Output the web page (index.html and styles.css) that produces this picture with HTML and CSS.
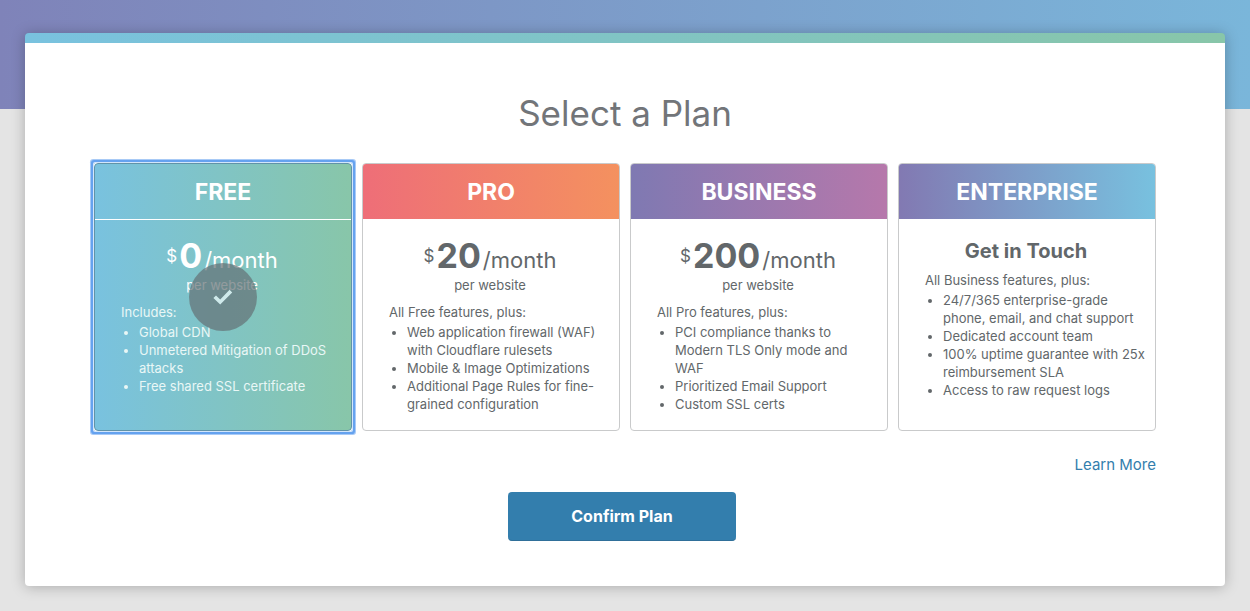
FILE: index.html
```html
<!DOCTYPE html>
<html lang="en">
<head>
<meta charset="utf-8">
<meta name="viewport" content="width=device-width, initial-scale=1">
<title>Select a Plan</title>
<link rel="stylesheet" href="styles.css">
</head>
<body>
<main class="page">
  <form class="panel">
    <h1 class="title">Select a Plan</h1>
    <div class="plans" role="radiogroup" aria-label="Plan">
      <label class="option selected">
        <input class="choice" type="radio" name="plan" value="free" checked>
        <span class="card">
          <span class="name">FREE</span>
          <span class="body">
            <span class="price"><span class="currency">$</span><strong class="amount">0</strong>/month</span>
            <span class="unit">per website</span>
            <span class="intro">Includes:</span>
            <span class="features" role="list">
              <span class="feature" role="listitem">Global CDN</span>
              <span class="feature" role="listitem">Unmetered Mitigation of DDoS attacks</span>
              <span class="feature" role="listitem">Free shared SSL certificate</span>
            </span>
          </span>
          <span class="check">
            <svg width="20" height="16" viewBox="0 0 20 16" aria-hidden="true"><path d="M0.4 9 3 6.4 7.2 10.4 16.6 0.8 19.2 3.4 7.2 15.6Z" fill="#cfeaeb"/></svg>
          </span>
        </span>
      </label>
      <label class="option">
        <input class="choice" type="radio" name="plan" value="pro">
        <span class="card">
          <span class="name pro">PRO</span>
          <span class="body">
            <span class="price"><span class="currency">$</span><strong class="amount">20</strong>/month</span>
            <span class="unit">per website</span>
            <span class="intro">All Free features, plus:</span>
            <span class="features" role="list">
              <span class="feature" role="listitem">Web application firewall (WAF) with Cloudflare rulesets</span>
              <span class="feature" role="listitem">Mobile &amp; Image Optimizations</span>
              <span class="feature" role="listitem">Additional Page Rules for fine-grained configuration</span>
            </span>
          </span>
        </span>
      </label>
      <label class="option">
        <input class="choice" type="radio" name="plan" value="business">
        <span class="card">
          <span class="name business">BUSINESS</span>
          <span class="body">
            <span class="price"><span class="currency">$</span><strong class="amount">200</strong>/month</span>
            <span class="unit">per website</span>
            <span class="intro">All Pro features, plus:</span>
            <span class="features" role="list">
              <span class="feature" role="listitem">PCI compliance thanks to Modern TLS Only mode and WAF</span>
              <span class="feature" role="listitem">Prioritized Email Support</span>
              <span class="feature" role="listitem">Custom SSL certs</span>
            </span>
          </span>
        </span>
      </label>
      <label class="option">
        <input class="choice" type="radio" name="plan" value="enterprise">
        <span class="card">
          <span class="name enterprise">ENTERPRISE</span>
          <span class="body">
            <strong class="contact">Get in Touch</strong>
            <span class="intro">All Business features, plus:</span>
            <span class="features" role="list">
              <span class="feature" role="listitem">24/7/365 enterprise-grade phone, email, and chat support</span>
              <span class="feature" role="listitem">Dedicated account team</span>
              <span class="feature" role="listitem">100% uptime guarantee with 25x reimbursement SLA</span>
              <span class="feature" role="listitem">Access to raw request logs</span>
            </span>
          </span>
        </span>
      </label>
    </div>
    <a class="more" href="#plans">Learn More</a>
    <button class="confirm" type="submit">Confirm Plan</button>
  </form>
</main>
</body>
</html>
```

FILE: styles.css
```css
* {
  box-sizing: border-box;
}

body {
  margin: 0;
  background: #e4e4e4;
  color: #62676a;
  font-family: Inter, "Liberation Sans", sans-serif;
  font-size: 13px;
  line-height: 18px;
}

.page {
  padding: 33px 25px 25px;
  background: linear-gradient(90deg, #7f83b9, #7ab6da) top / 100% 109px no-repeat;
}

.panel {
  display: flex;
  flex-direction: column;
  padding: 56px 69px 45px;
  border-radius: 4px;
  background: linear-gradient(90deg, #79c2df, #88c6a9) top / 100% 10px no-repeat, #fff;
  box-shadow: 0 1px 14px rgba(0, 0, 0, 0.25);
}

.title {
  margin: 0 0 26px;
  color: #727579;
  font-size: 35px;
  font-weight: 400;
  line-height: 48px;
  text-align: center;
}

.plans {
  display: grid;
  grid-template-columns: repeat(4, minmax(0, 1fr));
  gap: 10px;
}

.option {
  display: flex;
  cursor: pointer;
}

.choice {
  position: absolute;
  opacity: 0;
}

.card {
  position: relative;
  display: flex;
  flex: 1;
  flex-direction: column;
  overflow: hidden;
  border: 1px solid #c9cacb;
  border-radius: 4px;
}

.name {
  padding: 12px 0 11px;
  color: #fff;
  font-size: 23px;
  font-weight: 700;
  line-height: 32px;
  text-align: center;
}

.pro {
  background: linear-gradient(90deg, #ee6e78, #f4915f);
}

.business {
  background: linear-gradient(90deg, #7f79b2, #b678ab);
}

.enterprise {
  background: linear-gradient(90deg, #8279b2, #78c1df);
}

.body {
  display: flex;
  flex-direction: column;
  padding: 17px 8px 17px 26px;
}

.price,
.unit,
.contact {
  margin-left: -20px;
  text-align: center;
}

.price {
  height: 40px;
  font-size: 22px;
  line-height: 40px;
}

.currency {
  margin-right: 2px;
  font-size: 17px;
  line-height: 1;
  vertical-align: 6px;
}

.amount {
  margin-right: 2px;
  font-size: 34px;
  font-weight: 700;
}

.contact {
  margin-bottom: 5px;
  font-size: 20px;
  font-weight: 700;
  line-height: 30px;
}

.unit {
  margin-bottom: 9px;
}

.intro {
  margin-bottom: 2px;
}

.features {
  display: block;
  padding-left: 18px;
}

.feature {
  display: list-item;
  list-style: disc;
}

.selected {
  border-radius: 1px;
  box-shadow: 0 0 0 1px #d3e6fb, 0 0 0 3px #65a2ef, 0 0 0 4px #a8caf6;
}

.selected .card {
  border-color: #6193a8;
  background: linear-gradient(90deg, #79c2df, #88c6a9);
  color: #fff;
}

.selected .name {
  border-bottom: 1px solid #fff;
}

.selected .body {
  padding-top: 16px;
}

.selected .intro,
.selected .features {
  color: #e9f7f6;
}

.check {
  position: absolute;
  top: 50%;
  left: 50%;
  display: grid;
  place-items: center;
  width: 68px;
  height: 68px;
  border-radius: 50%;
  background: rgba(100, 113, 117, 0.7);
  transform: translate(-50%, -50%);
}

.more {
  align-self: flex-end;
  margin: 22px 0 16px;
  color: #337ead;
  font-size: 15px;
  line-height: 23px;
  text-decoration: none;
}

.confirm {
  align-self: center;
  width: 228px;
  height: 49px;
  margin-right: 6px;
  border: 0;
  border-bottom: 1px solid #2f6f99;
  border-radius: 4px;
  background: #337ead;
  color: #fff;
  font: 700 16px/20px Inter, "Liberation Sans", sans-serif;
  cursor: pointer;
}
```
